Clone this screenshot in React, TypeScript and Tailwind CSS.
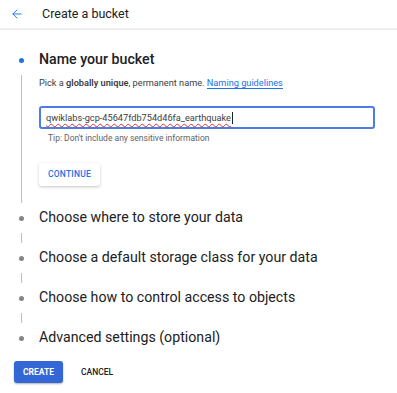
import { ArrowLeft } from "lucide-react";

const steps = [
  "Choose where to store your data",
  "Choose a default storage class for your data",
  "Choose how to control access to objects",
  "Advanced settings (optional)",
];

function Bullet({ active }: { active?: boolean }) {
  return (
    <div className="flex w-[39px] shrink-0 pl-[19px]">
      <span className={`h-[5px] w-[5px] rounded-full ${active ? "bg-[#1a73e8]" : "bg-[#80868b]"}`} />
    </div>
  );
}

export default function App() {
  return (
    <div className="h-[393px] w-[397px] overflow-hidden bg-white text-[#202124]" style={{ fontFamily: "Roboto, 'Liberation Sans', sans-serif" }}>
      {/* header */}
      <div className="flex h-[30px] items-center border-b-2 border-[#eeeeee]">
        <ArrowLeft className="ml-[10px] h-[14px] w-[14px] text-[#1a73e8]" strokeWidth={1.6} />
        <span className="ml-[18px] text-[12.5px]">Create a bucket</span>
      </div>

      <div className="pt-[18px]">
        {/* step 1, expanded */}
        <div className="flex h-[24px] items-center">
          <Bullet active />
          <span className="text-[14.2px] font-medium">Name your bucket</span>
        </div>
        <div className="flex">
          <div className="flex w-[39px] shrink-0 py-[3px] pl-[21px]">
            <div className="w-px bg-[#bdbdbd]" />
          </div>
          <div className="flex-1 pb-[20px] pr-[22px]">
            <div className="pt-[4px] text-[9.2px] leading-[14px] text-[#3c4043]">
              Pick a <b className="font-semibold">globally unique</b>, permanent name.{" "}
              <span className="border-b border-[#1a73e8] text-[#1a73e8]">Naming guidelines</span>
            </div>
            <div className="mt-[16px] flex h-[23px] items-center rounded-[3px] border-2 border-[#4d7ce8] px-[5px]">
              <span className="text-[9.2px] text-[#3c4043] underline decoration-[#d93025] decoration-wavy decoration-[1px] underline-offset-[2px]">
                qwiklabs-gcp-45647fdb754d46fa_earthquake
              </span>
              <span className="ml-px h-[12px] w-px bg-[#202124]" />
            </div>
            <div className="mt-[3px] pl-[9px] text-[8.5px] leading-[12px] text-[#5f6368]">
              Tip: Don't include any sensitive information
            </div>
            <button className="mt-[19px] h-[23px] rounded-[3px] px-[9px] text-[8.5px] font-medium tracking-[0.2px] text-[#1a73e8] shadow-[0_1px_3px_rgba(60,64,67,0.3)]">
              CONTINUE
            </button>
          </div>
        </div>

        {steps.map((s, i) => (
          <div key={s}>
            <div className="flex h-[24px] items-center">
              <Bullet />
              <span className="text-[14.2px]">{s}</span>
            </div>
            {i < steps.length - 1 && (
              <div className="flex h-[16px]">
                <div className="flex w-[39px] py-[3px] pl-[21px]">
                  <div className="w-px bg-[#bdbdbd]" />
                </div>
              </div>
            )}
          </div>
        ))}

        <div className="mt-[11px] flex items-center pl-[14px]">
          <button className="h-[22px] w-[49px] rounded-[3px] bg-[#3367d6] text-[8.5px] font-bold text-white shadow-[0_1px_2px_rgba(60,64,67,0.4)]">
            CREATE
          </button>
          <button className="ml-[18px] text-[8.5px] font-medium text-[#202124]">CANCEL</button>
        </div>
      </div>
    </div>
  );
}
